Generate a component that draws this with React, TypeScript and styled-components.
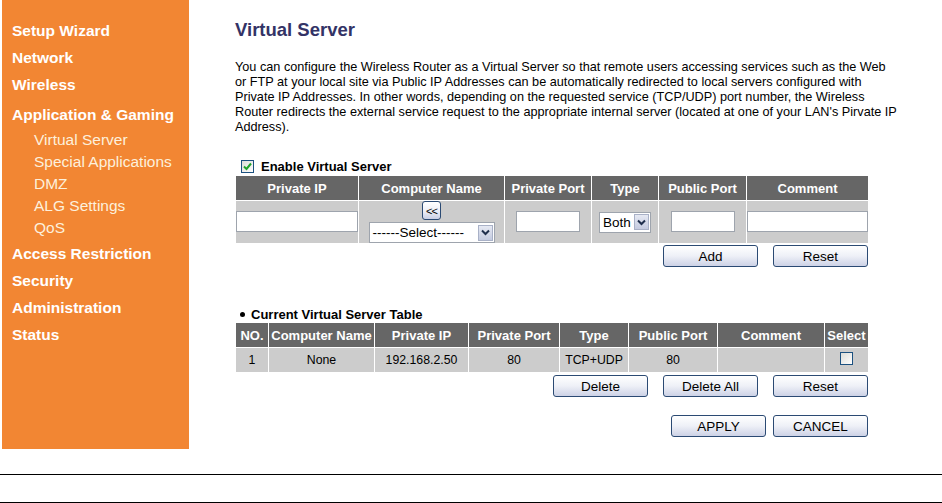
import React from "react";
import styled, { createGlobalStyle } from "styled-components";

const GlobalStyle = createGlobalStyle`
  html, body {
    margin: 0;
    padding: 0;
    background: #ffffff;
    overflow: hidden;
  }
  body {
    font-family: "Liberation Sans", Arial, sans-serif;
    color: #000;
  }
`;

type Col = { label: string; width: number };

const addCols: Col[] = [
  { label: "Private IP", width: 122 },
  { label: "Computer Name", width: 145 },
  { label: "Private Port", width: 86 },
  { label: "Type", width: 66 },
  { label: "Public Port", width: 87 },
  { label: "Comment", width: 121 },
];

const listCols: Col[] = [
  { label: "NO.", width: 32 },
  { label: "Computer Name", width: 105 },
  { label: "Private IP", width: 93 },
  { label: "Private Port", width: 90 },
  { label: "Type", width: 68 },
  { label: "Public Port", width: 88 },
  { label: "Comment", width: 106 },
  { label: "Select", width: 43 },
];

const servers = [
  {
    no: 1,
    name: "None",
    ip: "192.168.2.50",
    privatePort: "80",
    type: "TCP+UDP",
    publicPort: "80",
    comment: "",
  },
];

const Page = styled.div`
  width: 942px;
`;

const Top = styled.div`
  display: flex;
  margin-left: 2px;
  height: 449px;
`;

const Sidebar = styled.nav`
  width: 187px;
  background: #f28633;
  padding: 17px 0 0 10px;
  box-sizing: border-box;
`;

const NavItem = styled.div<{ $gap?: number }>`
  font-size: 15.5px;
  font-weight: bold;
  color: #ffffff;
  line-height: 27px;
  white-space: nowrap;
  margin-top: ${(p) => p.$gap ?? 0}px;
`;

const SubList = styled.div`
  padding: 1px 0 0 22px;
`;

const SubItem = styled.div`
  font-size: 15.5px;
  color: #fdf0dc;
  line-height: 22px;
  white-space: nowrap;
`;

const Main = styled.main`
  padding-left: 46px;
  width: 660px;
`;

const Title = styled.h1`
  margin: 19px 0 0;
  font-size: 18.5px;
  line-height: 22px;
  font-weight: bold;
  color: #333366;
`;

const Intro = styled.p`
  margin: 19px 0 0;
  font-size: 12.7px;
  line-height: 15px;
  white-space: nowrap;
`;

const EnableRow = styled.div`
  display: flex;
  align-items: center;
  gap: 7px;
  margin-top: 23px;
  height: 16px;
  padding-left: 6px;
  font-size: 13px;
  font-weight: bold;
`;

const Box = styled.span`
  display: inline-flex;
  align-items: center;
  justify-content: center;
  width: 13px;
  height: 13px;
  box-sizing: border-box;
  border: 1px solid #1c5180;
  background: linear-gradient(135deg, #dcdcd7 0%, #ffffff 100%);
`;

const Grid = styled.table<{ $top: number }>`
  margin-top: ${(p) => p.$top}px;
  border-collapse: separate;
  border-spacing: 1px;
  table-layout: fixed;
  width: 634px;
  background: #ffffff;
`;

const Head = styled.th`
  background: #666666;
  color: #ffffff;
  font-size: 13px;
  font-weight: bold;
  height: 24px;
  padding: 0;
  text-align: center;
  white-space: nowrap;
  overflow: hidden;
`;

const Cell = styled.td<{ $h: number }>`
  background: #cccccc;
  font-size: 12.3px;
  height: ${(p) => p.$h}px;
  padding: 0;
  text-align: center;
  vertical-align: middle;
`;

const Field = styled.input<{ $w?: number }>`
  display: block;
  margin: -1px auto 0;
  width: ${(p) => (p.$w ? `${p.$w}px` : "100%")};
  height: 21px;
  box-sizing: border-box;
  border: 1px solid #9ea4ad;
  background: #ffffff;
  padding: 0 2px;
  font-family: inherit;
  font-size: 12px;
  outline: none;
`;

const Stack = styled.div`
  display: flex;
  flex-direction: column;
  align-items: center;
  gap: 2px;
`;

const SmallButton = styled.button`
  width: 19px;
  height: 19px;
  box-sizing: border-box;
  padding: 0 0 0 3px;
  border: 1px solid #2b4a73;
  border-radius: 3px;
  background: linear-gradient(#ffffff 0%, #eceef6 55%, #c9cfe4 100%);
  font-family: inherit;
  font-size: 11px;
  letter-spacing: -1px;
  color: #000;
  overflow: hidden;
  white-space: nowrap;
  text-align: left;
`;

const Select = styled.div<{ $w: number }>`
  display: flex;
  align-items: center;
  justify-content: space-between;
  width: ${(p) => p.$w}px;
  height: 21px;
  box-sizing: border-box;
  margin: 0 auto;
  padding: 0 1px 0 3px;
  border: 1px solid #9ea4ad;
  background: #ffffff;
  font-size: 13.5px;
  color: #000;
  white-space: nowrap;
`;

const Arrow = styled.span`
  display: inline-flex;
  align-items: center;
  justify-content: center;
  width: 15px;
  height: 16px;
  box-sizing: border-box;
  border: 1px solid #a9b1c7;
  background: linear-gradient(#e6e9f3, #c4cbe0);
`;

const Actions = styled.div<{ $top: number; $gap: number }>`
  display: flex;
  justify-content: flex-end;
  gap: ${(p) => p.$gap}px;
  margin-top: ${(p) => p.$top}px;
  width: 633px;
`;

const Button = styled.button`
  width: 95px;
  height: 22px;
  box-sizing: border-box;
  padding: 0;
  border: 1px solid #2b4a73;
  border-radius: 3px;
  background: linear-gradient(#ffffff 0%, #eef0f7 50%, #cdd2e6 100%);
  font-family: inherit;
  font-size: 13.5px;
  color: #000;
`;

const SectionLabel = styled.div`
  display: flex;
  align-items: center;
  gap: 6px;
  margin-top: 39px;
  height: 16px;
  padding-left: 5px;
  font-size: 13px;
  font-weight: bold;
`;

const Dot = styled.span`
  width: 5px;
  height: 5px;
  border-radius: 50%;
  background: #000;
`;

const Rule = styled.div<{ $top: number }>`
  margin-top: ${(p) => p.$top}px;
  height: 1px;
  background: #000;
`;

const Chevron = () => (
  <svg width="9" height="7" viewBox="0 0 9 7">
    <path d="M1 1.5 L4.5 5 L8 1.5" fill="none" stroke="#1f2f4d" strokeWidth="2" />
  </svg>
);

const Check = () => (
  <svg width="11" height="11" viewBox="0 0 11 11">
    <path d="M2 5.5 L4.5 8 L9 2.5" fill="none" stroke="#21a32b" strokeWidth="2" />
  </svg>
);

export default function App() {
  return (
    <Page>
      <GlobalStyle />
      <Top>
        <Sidebar>
          <NavItem>Setup Wizard</NavItem>
          <NavItem>Network</NavItem>
          <NavItem>Wireless</NavItem>
          <NavItem $gap={3}>Application &amp; Gaming</NavItem>
          <SubList>
            <SubItem>Virtual Server</SubItem>
            <SubItem>Special Applications</SubItem>
            <SubItem>DMZ</SubItem>
            <SubItem>ALG Settings</SubItem>
            <SubItem>QoS</SubItem>
          </SubList>
          <NavItem $gap={1}>Access Restriction</NavItem>
          <NavItem>Security</NavItem>
          <NavItem>Administration</NavItem>
          <NavItem>Status</NavItem>
        </Sidebar>

        <Main>
          <Title>Virtual Server</Title>
          <Intro>
            You can configure the Wireless Router as a Virtual Server so that remote users accessing services such as the Web
            <br />
            or FTP at your local site via Public IP Addresses can be automatically redirected to local servers configured with
            <br />
            Private IP Addresses. In other words, depending on the requested service (TCP/UDP) port number, the Wireless
            <br />
            Router redirects the external service request to the appropriate internal server (located at one of your LAN's Pirvate IP
            <br />
            Address).
          </Intro>

          <EnableRow>
            <Box>
              <Check />
            </Box>
            Enable Virtual Server
          </EnableRow>

          <Grid $top={1}>
            <colgroup>
              {addCols.map((c) => (
                <col key={c.label} style={{ width: c.width }} />
              ))}
            </colgroup>
            <thead>
              <tr>
                {addCols.map((c) => (
                  <Head key={c.label}>{c.label}</Head>
                ))}
              </tr>
            </thead>
            <tbody>
              <tr>
                <Cell $h={41}>
                  <Field />
                </Cell>
                <Cell $h={41}>
                  <Stack>
                    <SmallButton>&lt;&lt;</SmallButton>
                    <Select $w={126}>
                      ------Select------
                      <Arrow>
                        <Chevron />
                      </Arrow>
                    </Select>
                  </Stack>
                </Cell>
                <Cell $h={41}>
                  <Field $w={64} />
                </Cell>
                <Cell $h={41}>
                  <Select $w={52}>
                    Both
                    <Arrow>
                      <Chevron />
                    </Arrow>
                  </Select>
                </Cell>
                <Cell $h={41}>
                  <Field $w={64} />
                </Cell>
                <Cell $h={41}>
                  <Field />
                </Cell>
              </tr>
            </tbody>
          </Grid>

          <Actions $top={1} $gap={15}>
            <Button>Add</Button>
            <Button>Reset</Button>
          </Actions>

          <SectionLabel>
            <Dot />
            Current Virtual Server Table
          </SectionLabel>

          <Grid $top={0}>
            <colgroup>
              {listCols.map((c) => (
                <col key={c.label} style={{ width: c.width }} />
              ))}
            </colgroup>
            <thead>
              <tr>
                {listCols.map((c) => (
                  <Head key={c.label}>{c.label}</Head>
                ))}
              </tr>
            </thead>
            <tbody>
              {servers.map((s) => (
                <tr key={s.no}>
                  <Cell $h={24}>{s.no}</Cell>
                  <Cell $h={24}>{s.name}</Cell>
                  <Cell $h={24}>{s.ip}</Cell>
                  <Cell $h={24}>{s.privatePort}</Cell>
                  <Cell $h={24}>{s.type}</Cell>
                  <Cell $h={24}>{s.publicPort}</Cell>
                  <Cell $h={24}>{s.comment}</Cell>
                  <Cell $h={24}>
                    <Box />
                  </Cell>
                </tr>
              ))}
            </tbody>
          </Grid>

          <Actions $top={2} $gap={15}>
            <Button>Delete</Button>
            <Button>Delete All</Button>
            <Button>Reset</Button>
          </Actions>

          <Actions $top={18} $gap={7}>
            <Button>APPLY</Button>
            <Button>CANCEL</Button>
          </Actions>
        </Main>
      </Top>
      <Rule $top={25} />
      <Rule $top={27} />
    </Page>
  );
}
